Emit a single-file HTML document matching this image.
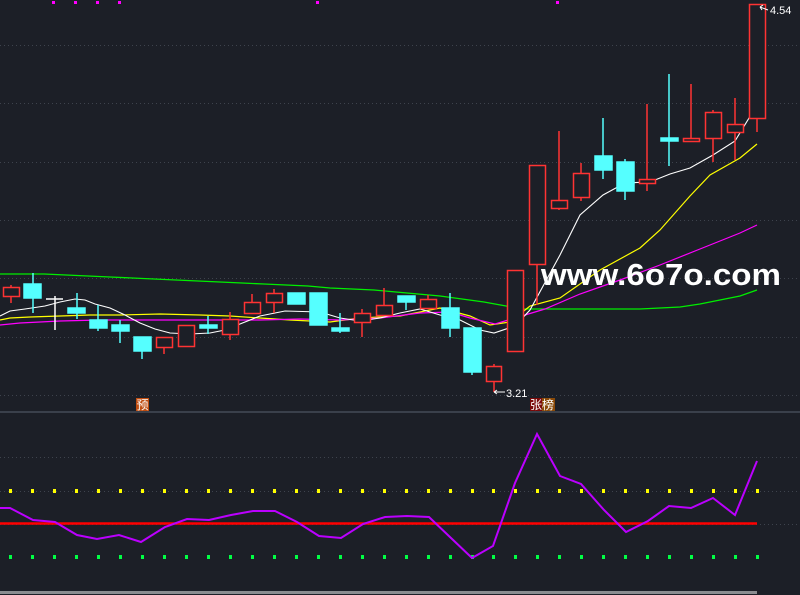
<!DOCTYPE html>
<html><head><meta charset="utf-8"><style>
html,body{margin:0;padding:0;background:#1c1f27;width:800px;height:595px;overflow:hidden}
svg{display:block}
</style></head><body>
<svg width="800" height="595" viewBox="0 0 800 595" xmlns="http://www.w3.org/2000/svg" font-family="Liberation Sans, Noto Sans CJK SC, sans-serif">
<rect width="800" height="595" fill="#1c1f27"/>
<g stroke="#3e434d" stroke-width="1" stroke-dasharray="1,3">
<line x1="0" y1="45.5" x2="800" y2="45.5"/><line x1="0" y1="103.5" x2="800" y2="103.5"/>
<line x1="0" y1="162.5" x2="800" y2="162.5"/><line x1="0" y1="220.5" x2="800" y2="220.5"/>
<line x1="0" y1="278.5" x2="800" y2="278.5"/><line x1="0" y1="337.5" x2="800" y2="337.5"/>
<line x1="0" y1="395.5" x2="800" y2="395.5"/>
<line x1="0" y1="457.5" x2="800" y2="457.5"/><line x1="0" y1="491.5" x2="800" y2="491.5"/><line x1="0" y1="524.5" x2="800" y2="524.5"/>
</g>
<line x1="0" y1="412" x2="800" y2="412" stroke="#3a404b" stroke-width="2"/>
<rect x="0" y="591" width="757" height="3" fill="#8a8c90"/>
<g fill="#ff00ff"><rect x="52" y="1" width="3" height="3"/><rect x="74" y="1" width="3" height="3"/><rect x="96" y="1" width="3" height="3"/><rect x="118" y="1" width="3" height="3"/><rect x="316" y="1" width="3" height="3"/><rect x="556" y="1" width="3" height="3"/></g>
<polyline fill="none" stroke="#00ee00" stroke-width="1.3" points="0,274 44,274 66,275 88,276 110,277 132,278 154,279 176,280 198,281 220,282 242,283 264,284 286,285 308,286 330,288 352,289 374,290 396,292 418,294 440,296 462,299 484,302 506,306 520,309 560,309 640,309 680,307 700,304 720,300 740,296 757,290"/>
<polyline fill="none" stroke="#ffff00" stroke-width="1.2" points="0,320 10,318 30,317 60,316 90,315 120,315 160,314 200,315 230,316 260,318 290,320 330,322 360,318 400,316 440,308 470,316 490,325 510,322 530,306 560,298 600,270 640,248 660,230 690,196 710,175 740,158 757,144"/>
<polyline fill="none" stroke="#ff00ff" stroke-width="1.2" points="0,325 20,323 60,321 100,320 140,320 180,320 220,320 260,320 300,319 340,320 380,318 420,313 450,312 470,318 495,324 515,318 545,309 580,294 620,280 660,265 700,249 720,241 740,233 757,225"/>
<polyline fill="none" stroke="#ffffff" stroke-width="1.1" points="0,316 10,311 25,309 45,306 60,302 75,299 85,300 95,304 110,308 125,315 140,323 155,329 170,333 190,334 210,333 225,330 240,324 260,316 285,311 320,312 340,318 360,321 380,318 400,313 420,309 440,315 460,320 480,330 494,333 515,326 530,310 560,255 580,215 603,195 625,183 650,182 670,174 690,168 713,155 735,141 757,105"/>
<g stroke="#ff3333" stroke-width="1.5" fill="#1c1f27">
<line x1="11" y1="285" x2="11" y2="303"/><rect x="3.5" y="287.5" width="16" height="9"/>
<line x1="164" y1="337" x2="164" y2="354"/><rect x="156.5" y="337.5" width="16" height="10"/>
<rect x="178.5" y="325.5" width="16" height="21"/>
<line x1="230" y1="312" x2="230" y2="340"/><rect x="222.5" y="319.5" width="16" height="15"/>
<line x1="252" y1="294" x2="252" y2="302"/><rect x="244.5" y="302.5" width="16" height="11"/>
<line x1="274" y1="289" x2="274" y2="313"/><rect x="266.5" y="293.5" width="16" height="9"/>
<line x1="362" y1="309" x2="362" y2="337"/><rect x="354.5" y="313.5" width="16" height="9"/>
<line x1="384" y1="288" x2="384" y2="305"/><rect x="376.5" y="305.5" width="16" height="10"/>
<line x1="428" y1="295" x2="428" y2="299"/><rect x="420.5" y="299.5" width="16" height="9"/>
<line x1="494" y1="364" x2="494" y2="392"/><rect x="486.5" y="366.5" width="15" height="15"/>
<rect x="507.5" y="270.5" width="16" height="81"/>
<line x1="537" y1="265" x2="537" y2="305"/><rect x="529.5" y="165.5" width="16" height="99"/>
<line x1="559" y1="131" x2="559" y2="210"/><rect x="551.5" y="200.5" width="16" height="8"/>
<line x1="581" y1="163" x2="581" y2="201"/><rect x="573.5" y="173.5" width="16" height="24"/>
<line x1="647" y1="104" x2="647" y2="191"/><rect x="639.5" y="179.5" width="16" height="4"/>
<line x1="691" y1="84" x2="691" y2="138"/><rect x="683.5" y="138.5" width="16" height="3"/>
<line x1="713" y1="110" x2="713" y2="162"/><rect x="705.5" y="112.5" width="16" height="26"/>
<line x1="735" y1="98" x2="735" y2="160"/><rect x="727.5" y="124.5" width="16" height="8"/>
<line x1="757" y1="118" x2="757" y2="132"/><rect x="749.5" y="4.5" width="16" height="114"/>
</g>
<g stroke="#55ffff" stroke-width="1.5" fill="#55ffff">
<line x1="33" y1="273" x2="33" y2="313"/><rect x="24" y="284" width="17" height="14"/>
<line x1="77" y1="293" x2="77" y2="319"/><rect x="68" y="308" width="17" height="5"/>
<line x1="98" y1="305" x2="98" y2="331"/><rect x="90" y="320" width="17" height="8"/>
<line x1="120" y1="320" x2="120" y2="343"/><rect x="112" y="325" width="17" height="6"/>
<line x1="142" y1="337" x2="142" y2="359"/><rect x="134" y="337" width="17" height="14"/>
<line x1="208" y1="316" x2="208" y2="334"/><rect x="200" y="325" width="17" height="3"/>
<rect x="288" y="293" width="17" height="11"/>
<rect x="310" y="293" width="17" height="32"/>
<line x1="340" y1="313" x2="340" y2="333"/><rect x="332" y="328" width="17" height="3"/>
<line x1="406" y1="296" x2="406" y2="310"/><rect x="398" y="296" width="17" height="6"/>
<line x1="450" y1="293" x2="450" y2="337"/><rect x="442" y="308" width="17" height="20"/>
<line x1="472" y1="328" x2="472" y2="375"/><rect x="464" y="328" width="17" height="44"/>
<line x1="603" y1="118" x2="603" y2="179"/><rect x="595" y="156" width="17" height="14"/>
<line x1="625" y1="159" x2="625" y2="200"/><rect x="617" y="162" width="17" height="29"/>
<line x1="669" y1="74" x2="669" y2="166"/><rect x="661" y="138" width="17" height="3"/>
</g>
<g stroke="#ffffff" stroke-width="1.5"><line x1="55" y1="296" x2="55" y2="330"/><line x1="46" y1="299" x2="63" y2="299"/></g>
<text x="770" y="14" font-size="11" fill="#ffffff">4.54</text>
<path d="M760 7 L768 10 M760 7 l3 -2 M760 7 l2 3" stroke="#fff" fill="none"/>
<text x="506" y="397" font-size="11" fill="#ffffff">3.21</text>
<path d="M494 392 H505 M494 392 l3 -2 M494 392 l3 2" stroke="#fff" fill="none"/>
<rect x="136" y="398" width="13" height="13" fill="#c04d10"/>
<text x="136.5" y="409" font-size="12" fill="#fff">预</text>
<rect x="530" y="398" width="12" height="13" fill="#7a0a0a"/><rect x="542" y="398" width="13" height="13" fill="#8a4a08"/>
<text x="530" y="409" font-size="12" fill="#fff">张榜</text>
<text x="541" y="285" font-size="31" font-weight="bold" fill="#ffffff" textLength="240" lengthAdjust="spacingAndGlyphs">www.6o7o.com</text>
<line x1="0" y1="523.5" x2="757" y2="523.5" stroke="#ff0000" stroke-width="2.5"/>
<g fill="#ffff00">
<rect x="9" y="489" width="3" height="4"/><rect x="31" y="489" width="3" height="4"/><rect x="53" y="489" width="3" height="4"/><rect x="75" y="489" width="3" height="4"/><rect x="97" y="489" width="3" height="4"/><rect x="119" y="489" width="3" height="4"/><rect x="141" y="489" width="3" height="4"/><rect x="163" y="489" width="3" height="4"/><rect x="185" y="489" width="3" height="4"/><rect x="207" y="489" width="3" height="4"/><rect x="229" y="489" width="3" height="4"/><rect x="251" y="489" width="3" height="4"/><rect x="273" y="489" width="3" height="4"/><rect x="295" y="489" width="3" height="4"/><rect x="317" y="489" width="3" height="4"/><rect x="339" y="489" width="3" height="4"/><rect x="361" y="489" width="3" height="4"/><rect x="383" y="489" width="3" height="4"/><rect x="405" y="489" width="3" height="4"/><rect x="427" y="489" width="3" height="4"/><rect x="449" y="489" width="3" height="4"/><rect x="471" y="489" width="3" height="4"/><rect x="492" y="489" width="3" height="4"/><rect x="514" y="489" width="3" height="4"/><rect x="536" y="489" width="3" height="4"/><rect x="558" y="489" width="3" height="4"/><rect x="580" y="489" width="3" height="4"/><rect x="602" y="489" width="3" height="4"/><rect x="624" y="489" width="3" height="4"/><rect x="646" y="489" width="3" height="4"/><rect x="668" y="489" width="3" height="4"/><rect x="690" y="489" width="3" height="4"/><rect x="712" y="489" width="3" height="4"/><rect x="734" y="489" width="3" height="4"/><rect x="756" y="489" width="3" height="4"/>
</g>
<g fill="#00ff44">
<rect x="9" y="555" width="3" height="4"/><rect x="31" y="555" width="3" height="4"/><rect x="53" y="555" width="3" height="4"/><rect x="75" y="555" width="3" height="4"/><rect x="97" y="555" width="3" height="4"/><rect x="119" y="555" width="3" height="4"/><rect x="141" y="555" width="3" height="4"/><rect x="163" y="555" width="3" height="4"/><rect x="185" y="555" width="3" height="4"/><rect x="207" y="555" width="3" height="4"/><rect x="229" y="555" width="3" height="4"/><rect x="251" y="555" width="3" height="4"/><rect x="273" y="555" width="3" height="4"/><rect x="295" y="555" width="3" height="4"/><rect x="317" y="555" width="3" height="4"/><rect x="339" y="555" width="3" height="4"/><rect x="361" y="555" width="3" height="4"/><rect x="383" y="555" width="3" height="4"/><rect x="405" y="555" width="3" height="4"/><rect x="427" y="555" width="3" height="4"/><rect x="449" y="555" width="3" height="4"/><rect x="471" y="555" width="3" height="4"/><rect x="492" y="555" width="3" height="4"/><rect x="514" y="555" width="3" height="4"/><rect x="536" y="555" width="3" height="4"/><rect x="558" y="555" width="3" height="4"/><rect x="580" y="555" width="3" height="4"/><rect x="602" y="555" width="3" height="4"/><rect x="624" y="555" width="3" height="4"/><rect x="646" y="555" width="3" height="4"/><rect x="668" y="555" width="3" height="4"/><rect x="690" y="555" width="3" height="4"/><rect x="712" y="555" width="3" height="4"/><rect x="734" y="555" width="3" height="4"/><rect x="756" y="555" width="3" height="4"/>
</g>
<polyline fill="none" stroke="#bb00ff" stroke-width="2" points="0,508 10,508 33,520 55,522 77,535 97,539 119,535 141,542 165,527 187,519 209,520 231,515 253,511 275,511 297,522 319,536 341,538 363,524 385,517 407,516 429,517 451,538 472,558 493,546 515,483 537,434 560,476 581,484 604,510 626,532 648,521 669,506 691,508 713,498 735,515 757,461"/>
</svg>
</body></html>
